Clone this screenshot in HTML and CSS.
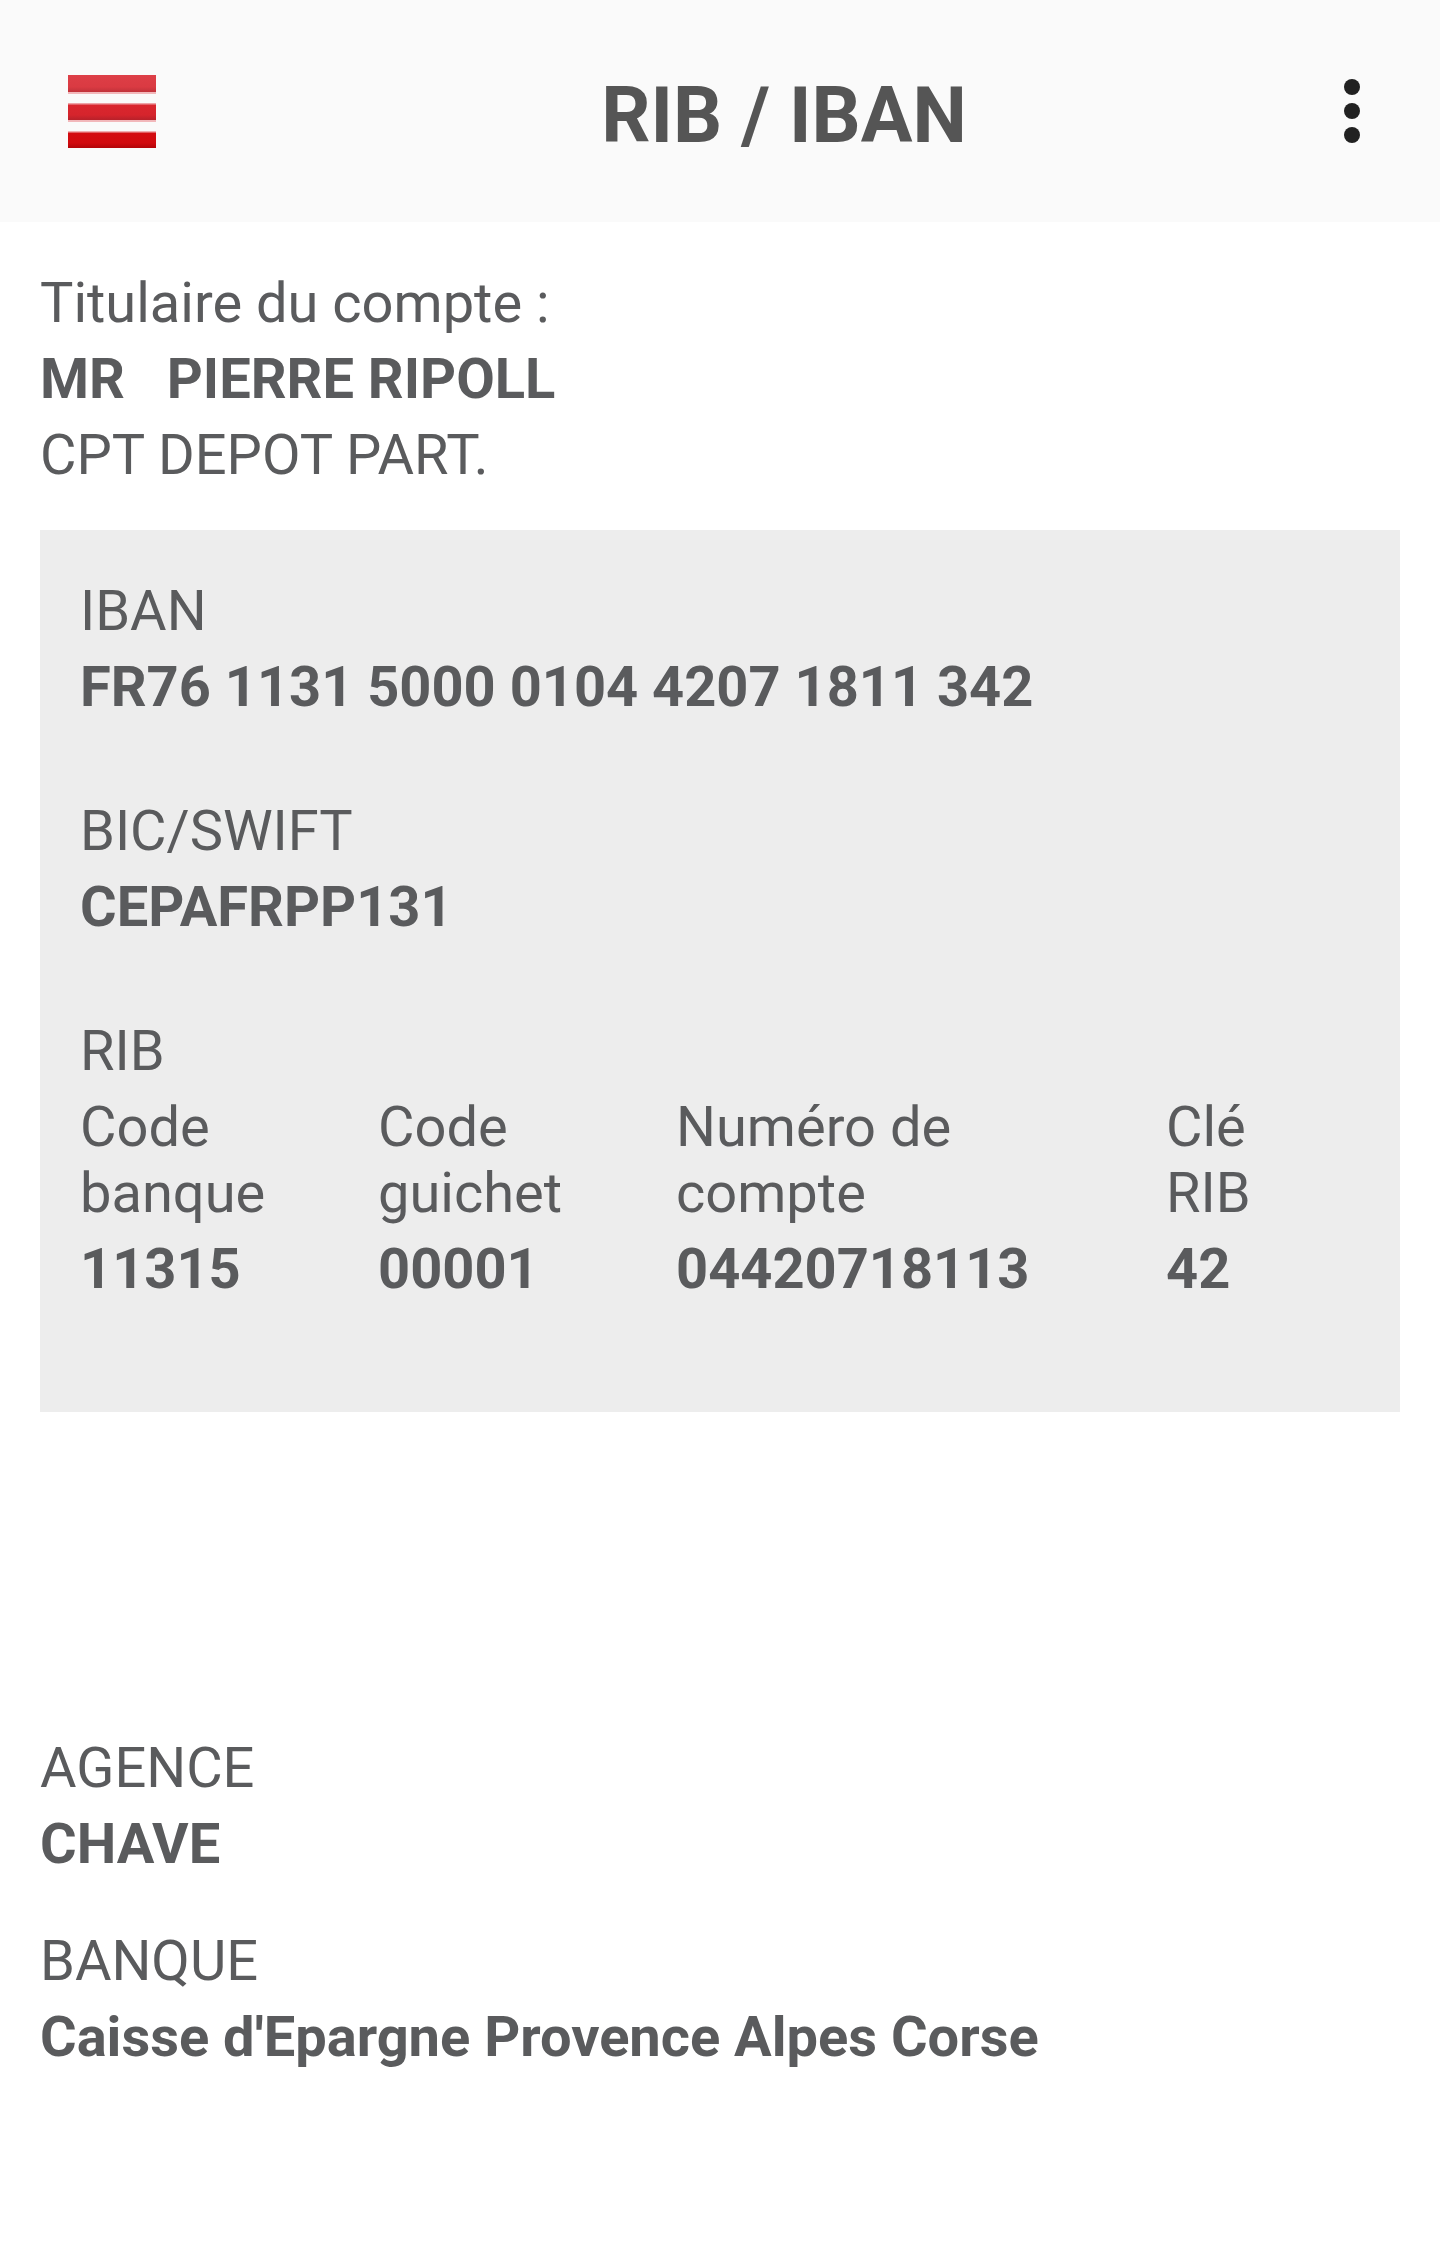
FILE: index.html
```html
<!DOCTYPE html>
<html lang="fr">
<head>
<meta charset="utf-8">
<title>RIB / IBAN</title>
<link rel="stylesheet" href="styles.css">
</head>
<body>
<header class="toolbar">
  <div class="nav-slot">
    <div class="burger">
      <span class="bar bar1"></span>
      <span class="bar bar2"></span>
      <span class="bar bar3"></span>
    </div>
  </div>
  <h1 class="title">RIB / IBAN</h1>
  <div class="more-slot">
    <div class="more">
      <span class="dot"></span>
      <span class="dot"></span>
      <span class="dot"></span>
    </div>
  </div>
</header>

<main class="content">
  <section class="holder">
    <p class="txt">Titulaire du compte :</p>
    <p class="txt strong name">MR   PIERRE RIPOLL</p>
    <p class="txt">CPT DEPOT PART.</p>
  </section>

  <section class="card">
    <div class="group">
      <p class="txt">IBAN</p>
      <p class="txt strong">FR76 1131 5000 0104 4207 1811 342</p>
    </div>
    <div class="group">
      <p class="txt">BIC/SWIFT</p>
      <p class="txt strong">CEPAFRPP131</p>
    </div>
    <div class="group">
      <p class="txt">RIB</p>
      <div class="rib">
        <div class="col">
          <p class="txt label">Code banque</p>
          <p class="txt strong">11315</p>
        </div>
        <div class="col">
          <p class="txt label">Code guichet</p>
          <p class="txt strong">00001</p>
        </div>
        <div class="col col-wide">
          <p class="txt label">Numéro de compte</p>
          <p class="txt strong">04420718113</p>
        </div>
        <div class="col col-key">
          <p class="txt label">Clé RIB</p>
          <p class="txt strong">42</p>
        </div>
      </div>
    </div>
  </section>

  <section class="agency">
    <div class="group">
      <p class="txt">AGENCE</p>
      <p class="txt strong">CHAVE</p>
    </div>
    <div class="group">
      <p class="txt">BANQUE</p>
      <p class="txt strong">Caisse d'Epargne Provence Alpes Corse</p>
    </div>
  </section>
</main>
</body>
</html>
```

FILE: styles.css
```css
* {
  box-sizing: border-box;
}

html, body {
  margin: 0;
  padding: 0;
  background: #ffffff;
}

body {
  font-family: Roboto, "Liberation Sans", Arial, sans-serif;
  color: #5a5b5d;
  width: 1440px;
  min-height: 2256px;
}

/* ---------- toolbar ---------- */
.toolbar {
  height: 222px;
  background: #fafafa;
  display: flex;
  align-items: center;
}

.nav-slot {
  width: 264px;
  padding-left: 68px;
  display: flex;
  align-items: center;
}

.burger {
  width: 88px;
  display: flex;
  flex-direction: column;
  gap: 11px;
}

.bar {
  display: block;
  height: 17px;
}

.bar1 {
  background: linear-gradient(to bottom, #dd3f47 0%, #da3a42 70%, #c0323a 100%);
  box-shadow: 0 2px 0 #f2b8bb;
}

.bar2 {
  background: linear-gradient(to bottom, #eea3a7 0, #eea3a7 1px, #d9262e 2px, #d6242c 70%, #b8212a 100%);
  box-shadow: 0 2px 0 #f2b8bb;
}

.bar3 {
  background: linear-gradient(to bottom, #f0b0b2 0, #f0b0b2 1px, #d30c10 2px, #d10a0e 70%, #b20408 100%);
}

.title {
  flex: 1;
  margin: 0;
  padding-top: 10px;
  text-align: center;
  font-size: 77px;
  font-weight: 700;
  color: #555555;
  line-height: 90px;
}

.more-slot {
  width: 136px;
  padding-right: 40px;
  display: flex;
  justify-content: center;
}

.more {
  display: flex;
  flex-direction: column;
  gap: 8px;
}

.dot {
  display: block;
  width: 16px;
  height: 16px;
  border-radius: 50%;
  background: #212121;
}

/* ---------- content ---------- */
.content {
  padding: 48px 40px 0 40px;
}

.txt {
  margin: 0 0 10px 0;
  font-size: 56px;
  line-height: 66px;
  font-weight: 400;
}

.strong {
  font-weight: 700;
}

.name {
  white-space: pre;
}

.holder {
  display: flow-root;
  margin-bottom: 32px;
}

.card {
  background: #ededed;
  padding: 48px 40px 100px 40px;
  display: flex;
  flex-direction: column;
  gap: 68px;
}

.rib {
  display: grid;
  grid-template-columns: 298px 298px 490px 150px;
}

.col-wide .label {
  max-width: 320px;
}

.col-key .label {
  max-width: 130px;
}

.agency {
  padding-top: 323px;
  display: flex;
  flex-direction: column;
  gap: 41px;
}
```
